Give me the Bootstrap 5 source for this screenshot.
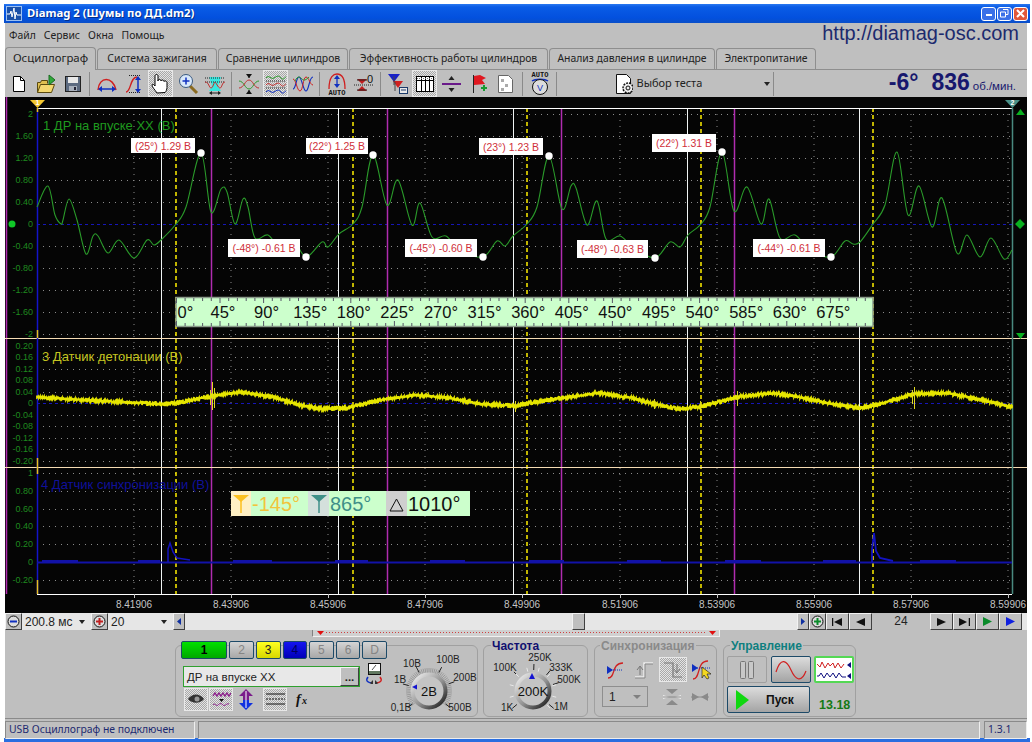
<!DOCTYPE html>
<html lang="ru">

<head>
    <meta charset="UTF-8">
    <meta name="viewport" content="width=device-width, initial-scale=1.0">
    <title>Diamag 2</title>

    <link href="https://cdn.jsdelivr.net/npm/bootstrap@5.3.2/dist/css/bootstrap.min.css" rel="stylesheet">

    <style>
        html, body { height: 742px; overflow: hidden; background: #fff; }
        body { font-family: "Noto Sans", "Liberation Sans", sans-serif; font-size: 10.4px; color: #222; }
        .app-win { width: 1026px; margin: 4px 0 0 4px; }
        .win-title { height: 19px; background: linear-gradient(#2a78f0 0, #0a5ce6 3px, #0350de 14px, #0a4fc8 100%); color: #fff; font-weight: 700; font-size: 11.3px; padding-left: 2px; text-shadow: 1px 1px 0 #02308c; }
        .win-logo { width: 16px; height: 15px; background: #1a50a8; border: 1px solid #9cc0f0; margin-right: 5px; }
        .win-btn { width: 15px; height: 14px; border: 1px solid #fff; border-radius: 3px; background: #3a70e8; margin-right: 1px; }
        .win-btn.is-close { background: #e0583a; margin-right: 2px; }
        .win-body { margin-left: 1px; width: 1022px; background: #bfbfbf; }
        .win-foot { height: 4px; background: #2a6ee0; }

        .menu-row { height: 24px; padding-left: 4px; }
        .menu-row span { margin-right: 8px; padding-top: 5px; }
        .site-url { font: 20px "Liberation Sans", sans-serif; color: #1c2a6e; margin-right: 8px; line-height: 20px; }

        .tabs-row { height: 22px; border: 0; gap: 1px; padding: 0; flex-wrap: nowrap; }
        .tabs-row .nav-link { height: 21px; margin: 1px 0 0; padding: 2px 0 0; text-align: center; font-size: 10.4px; line-height: 15px; color: #222; background: #bfbfbf; border: 1px solid #8e8e8e; border-bottom: 0; border-radius: 4px 4px 0 0; }
        .tabs-row .nav-link.active { height: 23px; margin-top: 0; padding-top: 2px; font-size: 11.4px; background: #bfbfbf; color: #222; border-color: #8e8e8e; }
        .tab-a { width: 91px; } .tab-b { width: 120px; } .tab-c { width: 130px; } .tab-d { width: 199px; } .tab-e { width: 166px; } .tab-f { width: 100px; }

        .tool-row { height: 28px; border-top: 1px solid #8e8e8e; }
        .tb-btn { width: 27px; height: 27px; padding: 0; border: 0; border-radius: 0; display: flex; align-items: center; justify-content: center; flex: none; }
        .tb-on { width: 25px; margin: 0 1px; background: repeating-conic-gradient(#a8a8a8 0 25%, #e4e4e4 0 50%) 0 0 / 2px 2px; border: 1px solid #e8e8e8; }
        .tb-sep { width: 1px; height: 24px; background: #8a8a8a; margin: 0 3px; flex: none; }
        .test-pick { width: 210px; padding: 0 0 0 55px; }
        .test-pick .pick-text { margin-left: 3px; font-size: 11px; width: 112px; }
        .tri-down { width: 0; height: 0; border-left: 3px solid transparent; border-right: 3px solid transparent; border-top: 4px solid #222; display: inline-block; }
        .rpm-box { margin-left: auto; margin-right: 11px; color: #17186e; font: 700 23px "Liberation Sans", sans-serif; white-space: nowrap; line-height: 24px; }
        .rpm-box small { font-weight: 400; font-size: 11.5px; margin-left: 3px; }
        .rpm-gap { margin-left: 13px; }

        .scope { height: 516px; background: #050505; }
        .scope svg { display: block; }
        .t-ax { font: 9px "Liberation Sans", sans-serif; fill: #1f8a1f; }
        .t-time { font: 10px "Liberation Sans", sans-serif; fill: #c4c4c4; text-anchor: middle; }
        .t-tag { font: 10.5px "Liberation Sans", sans-serif; fill: #d0303a; text-anchor: middle; }
        .t-title { font: 13px "Liberation Sans", sans-serif; }
        .t-ruler { font: 16.5px "Liberation Sans", sans-serif; fill: #111; text-anchor: middle; }
        .t-read { font: 20px "Liberation Sans", sans-serif; }
        .t-pin { font: 700 7px "Liberation Sans", sans-serif; text-anchor: middle; }

        .scroll-row { height: 17px; background: #e6e6e6; }
        .raised { background: #bfbfbf; border: 1px solid; border-color: #f2f2f2 #404040 #404040 #f2f2f2; display: flex; align-items: center; justify-content: center; flex: none; }
        .combo-box { background: #e6e6e6; font: 12px "Liberation Sans", sans-serif; padding: 0 6px 0 3px; display: flex; align-items: center; justify-content: space-between; flex: none; }
        .combo-a { width: 69px; } .combo-b { width: 65px; }
        .sq-btn { width: 17px; height: 17px; }
        .sb-btn { width: 12px; height: 17px; }
        .sb-track { width: 612px; flex: none; padding-left: 387px; }
        .sb-thumb { width: 13px; height: 17px; }
        .nav-btn { width: 23px; height: 17px; }
        .page-no { width: 58px; background: #bfbfbf; text-align: center; font: 12px "Liberation Sans", sans-serif; line-height: 17px; flex: none; }

        .ctrl-panel { height: 88px; }
        .range-strip { height: 7px; width: 408px; margin-left: 307px; background: #d0d0d0; border: 1px solid; border-color: #808080 #f0f0f0 #f0f0f0 #808080; border-top: 0; }
        .range-strip svg { display: block; }
        .group-row { padding-left: 170px; padding-top: 8px; gap: 5px; }
        .ctl-group { position: relative; height: 72px; border: 1px solid #a0a0a0; border-radius: 6px; flex: none; }
        .ctl-title { position: absolute; top: -7px; left: 6px; background: #bfbfbf; font: 700 12px "Liberation Sans", sans-serif; line-height: 14px; padding: 0 1px; }
        .title-freq { color: #101070; left: 7px; }
        .title-sync { color: #8a8a8a; left: 5px; }
        .title-ctrl { color: #0f7f7f; }
        .g-chan { width: 303px; } .g-freq { width: 105px; } .g-sync { width: 123px; margin-left: 1px; } .g-ctrl { width: 133px; margin-left: 1px; }
        .chan-col { width: 211px; margin-top: -5px; padding-left: 5px; }
        .ch-row { gap: 2px; }
        .ch-btn { width: 25px; height: 18px; padding: 0; border: 1px solid #1d4a68; border-radius: 2px; font: 12px "Liberation Sans", sans-serif; line-height: 15px; color: #858585; background: linear-gradient(#d4d4d4, #a8a8a8); }
        .ch-one { width: 47px; color: #000; font-weight: 700; background: linear-gradient(#00e000, #00a800); }
        .ch-yel { color: #222; background: linear-gradient(#ffff20, #d8d800); }
        .ch-blu { color: #00005a; background: linear-gradient(#1414f0, #0000b8); }
        .name-box { width: 177px; height: 21px; margin: 7px 0 0 2px; border: 1px solid #2fa02f; background: #e8e8e8; font: 11.5px "Liberation Sans", sans-serif; padding-left: 3px; }
        .name-dots { width: 19px; height: 19px; font-weight: 700; line-height: 10px; }
        .ch-tools { margin-left: 3px; height: 24px; }
        .ch-tool { width: 24px; height: 23px; margin-right: 1px; display: flex; align-items: center; justify-content: center; flex: none; }
        .ch-tool.tb-on { margin: 0 1px 0 0; }
        .sync-grid { padding: 11px 0 0 7px; }
        .sync-cell { width: 28px; height: 25px; display: flex; align-items: center; justify-content: center; flex: none; }
        .sync-pair { margin-top: 2px; }
        .sync-num { width: 46px; height: 21px; border: 1px solid #8e8e8e; font: 12px "Liberation Sans", sans-serif; padding: 0 6px; color: #222; margin-right: 10px; }
        .tri-soft { border-top-color: #808080; border-left-width: 4px; border-right-width: 4px; }
        .ctrl-wrap { padding: 10px 0 0 3px; }
        .mode-btn { width: 40px; height: 27px; padding: 0; border-radius: 2px; display: flex; align-items: center; justify-content: center; flex: none; }
        .mode-off { border: 1px solid #a0a0a0; background: #bfbfbf; }
        .mode-on { border: 1px solid #1d4a68; background: linear-gradient(#dcdcdc, #a4a4a4); }
        .mode-lit { border: 2px solid #54d854; background: #fff; margin-left: 3px; }
        .run-btn { width: 83px; height: 27px; margin-top: 3px; padding: 0 0 0 8px; border: 1px solid #1d4a68; border-radius: 2px; background: linear-gradient(#dcdcdc, #a4a4a4); font: 700 12px "Liberation Sans", sans-serif; color: #111; display: flex; align-items: center; }
        .run-btn span { margin-left: 16px; }
        .volt-read { font: 700 12.5px "Liberation Sans", sans-serif; color: #157a15; margin: 15px 0 0 9px; line-height: 14px; }

        .status-row { height: 20px; border-top: 1px solid #8a8a8a; padding-top: 2px; }
        .stat-cell { height: 18px; border: 1px solid; border-color: #8a8a8a #eee #eee #8a8a8a; font: 10.4px "Noto Sans", sans-serif; line-height: 15px; color: #1d2a70; padding-left: 3px; flex: none; }
        .st-a { width: 190px; margin-right: 3px; } .st-b { width: 782px; margin-right: 4px; } .st-c { width: 43px; }
    </style>
</head>

<body>
    <div class="app-win">
        <div class="win-title d-flex align-items-center">
            <span class="win-logo d-flex align-items-center justify-content-center">
                <svg width="14" height="13" viewBox="0 0 14 13"><path d="M0 7h3l1-3 1 6 2-9 1 11 1-7 1 3h4" fill="none" stroke="#fff"/></svg>
            </span>
            <span class="flex-grow-1">Diamag 2 (Шумы по ДД.dm2)</span>
            <span class="win-btn d-flex align-items-end ps-1 pb-1"><svg width="6" height="2"><rect width="6" height="2" fill="#fff"/></svg></span>
            <span class="win-btn d-flex align-items-center justify-content-center"><svg width="9" height="9"><path d="M3 .5h5v5h-2M.5 3h5v5h-5z" fill="none" stroke="#fff"/></svg></span>
            <span class="win-btn is-close d-flex align-items-center justify-content-center"><svg width="9" height="9"><path d="M1 1l7 7M8 1L1 8" stroke="#fff" stroke-width="2"/></svg></span>
        </div>

        <div class="win-body">
            <div class="menu-row d-flex justify-content-between">
                <div class="d-flex"><span>Файл</span><span>Сервис</span><span>Окна</span><span>Помощь</span></div>
                <div class="site-url">http://diamag-osc.com</div>
            </div>

            <ul class="nav nav-tabs tabs-row">
                <li class="nav-item"><a class="nav-link active tab-a" href="#">Осциллограф</a></li>
                <li class="nav-item"><a class="nav-link tab-b" href="#">Система зажигания</a></li>
                <li class="nav-item"><a class="nav-link tab-c" href="#">Сравнение цилиндров</a></li>
                <li class="nav-item"><a class="nav-link tab-d" href="#">Эффективность работы цилиндров</a></li>
                <li class="nav-item"><a class="nav-link tab-e" href="#">Анализ давления в цилиндре</a></li>
                <li class="nav-item"><a class="nav-link tab-f" href="#">Электропитание</a></li>
            </ul>

            <div class="tool-row d-flex align-items-center">
                <button class="btn tb-btn"><svg width="20" height="20"><path d="M4.500 2.500h7l4 4v11h-11z" fill="#fff" stroke="#000"/><path d="M11.500 2.500v4h4" fill="none" stroke="#000"/></svg></button>
                <button class="btn tb-btn"><svg width="22" height="20"><path d="M2.500 18.500v-10h3l1-2h6v3" fill="#e0c050" stroke="#5a4a10"/><path d="M2.500 18.500l3-8h14l-3 8z" fill="#f4d870" stroke="#5a4a10"/><path d="M14 1l6 5-6 5z" fill="#2fa83a" stroke="#1a6a20"/></svg></button>
                <button class="btn tb-btn"><svg width="18" height="18"><rect x="1.500" y="1.500" width="15" height="15" fill="#5c6a80" stroke="#222"/><rect x="4" y="2" width="10" height="6" fill="#e8e8e8"/><rect x="5" y="11" width="8" height="5" fill="#a8b0bc"/><rect x="10" y="12" width="2" height="3" fill="#223"/></svg></button>
                <div class="tb-sep"></div>
                <button class="btn tb-btn"><svg width="22" height="22"><path d="M2 17C3 3 17 3 20 17" fill="none" stroke="#d02020" stroke-width="1.500"/><path d="M3 16h16" stroke="#1030c0" stroke-width="1.500"/><path d="M2 16l4-3v6zM20 16l-4-3v6z" fill="#1030c0"/></svg></button>
                <button class="btn tb-btn"><svg width="22" height="22"><path d="M3 19c5 0 4-15 11-15" fill="none" stroke="#d02020" stroke-width="1.300"/><path d="M6 2.500h12M6 19.500h12" stroke="#222" stroke-dasharray="1 1"/><path d="M15 5v13" stroke="#1030c0" stroke-width="1.500"/><path d="M15 3l-3 4h6zM15 20l-3-4h6z" fill="#1030c0"/></svg></button>
                <button class="btn tb-btn tb-on"><svg width="19" height="22"><path d="M6 20c-2-3-5-6-5-8 0-1 2-1 3 1V3c0-2 3-2 3 0v5c0-2 3-2 3 0 0-1.500 3-1.500 3 .5 0-1 3-1 3 1v5c0 2-1 4-2 5z" fill="#fff" stroke="#000"/></svg></button>
                <button class="btn tb-btn"><svg width="22" height="22"><path d="M13 13l7 7" stroke="#8a6a20" stroke-width="3"/><circle cx="9" cy="8" r="6.500" fill="#d8e8fa" stroke="#3a5a80"/><path d="M5.500 8h7M9 4.500v7" stroke="#1030c0" stroke-width="1.500"/></svg></button>
                <button class="btn tb-btn"><svg width="22" height="22"><path d="M5 4h12l-3 9 3 5H5l3-5z" fill="#38e8e0"/><path d="M1 5h20M1 9h20" stroke="#222" stroke-dasharray="1 1"/><path d="M1 9c4 0 4 6 6 6s3-6 4-6 3 6 5 6 2-6 5-6" fill="none" stroke="#c03030"/><path d="M6 20h10" stroke="#222"/><path d="M5 20l3-2v4zM17 20l-3-2v4z" fill="#222"/></svg></button>
                <div class="tb-sep"></div>
                <button class="btn tb-btn"><svg width="22" height="22"><path d="M1 8c5 0 6 8 10 8s5-8 10-8" fill="none" stroke="#2a9a2a"/><path d="M1 15c5 0 6-8 10-8s5 8 10 8" fill="none" stroke="#c03030"/><path d="M11 5V1M11 17v4" stroke="#111"/><path d="M8 1h6l-3 4zM8 21h6l-3-4z" fill="#111"/></svg></button>
                <button class="btn tb-btn tb-on"><svg width="22" height="22"><path d="M1 5c3-4 5 2 8 0s5-3 7 0 4-1 5-1" fill="none" stroke="#2a9a2a"/><path d="M1 12c3-4 5 2 8 0s5-3 7 0 4-1 5-1" fill="none" stroke="#c03030"/><path d="M1 19c3-4 5 2 8 0s5-3 7 0 4-1 5-1" fill="none" stroke="#1030c0"/><path d="M1 8h20M1 15h20" stroke="#222" stroke-dasharray="1 1"/></svg></button>
                <button class="btn tb-btn"><svg width="22" height="22"><path d="M1 16c3 0 3-12 6-12s4 14 7 14 3-14 7-14" fill="none" stroke="#1030c0" stroke-width="1.100"/><path d="M1 6c3 0 4 12 7 12s3-14 6-14 4 8 7 8" fill="none" stroke="#d02020"/><path d="M3 8c3-6 5-4 7-2s4 1 7-2" fill="none" stroke="#2a9a2a"/></svg></button>
                <div class="tb-sep"></div>
                <button class="btn tb-btn"><svg width="22" height="24"><path d="M3 17C3 4 8 2 11 2s8 2 8 15" fill="none" stroke="#d02020" stroke-width="1.300"/><path d="M11 5v9" stroke="#1030c0" stroke-width="1.300"/><path d="M11 3L8 7h6zM11 16l-3-4h6z" fill="#1030c0"/><text x="11" y="23" text-anchor="middle" font-family="Liberation Mono" font-weight="700" font-size="7" fill="#111">AUTO</text></svg></button>
                <button class="btn tb-btn"><svg width="22" height="20"><path d="M1 11h20" stroke="#222" stroke-dasharray="1 1"/><path d="M4 5h10l-5 5zM4 17h10l-5-5z" fill="#c02020"/><path d="M4 6h10M4 16h10" stroke="#222"/><text x="17" y="9" text-anchor="middle" font-family="Liberation Sans" font-size="11" fill="#111">0</text></svg></button>
                <div class="tb-sep"></div>
                <button class="btn tb-btn"><svg width="22" height="22"><path d="M1 1h12l-6 8z" fill="#1820c8"/><path d="M6 8h10l-5 7z" fill="#d02020"/><path d="M8 9v9M7 3v9" stroke="#444"/><rect x="12.500" y="14.500" width="8" height="6" fill="#e8e8e8" stroke="#1a3a6a"/><path d="M14 17h5" stroke="#1a3a6a"/></svg></button>
                <button class="btn tb-btn tb-on"><svg width="20" height="20"><rect x="1.500" y="2.500" width="17" height="15" fill="#fff" stroke="#000"/><path d="M1 6.500h18" stroke="#000"/><path d="M6.500 3v14M10.500 3v14M14.500 3v14" stroke="#000"/><path d="M2 4.500h16" stroke="#777" stroke-dasharray="1 1"/></svg></button>
                <button class="btn tb-btn"><svg width="21" height="20"><path d="M1 10h19" stroke="#6a1a8a" stroke-width="2"/><path d="M10.500 2l-3 4h6zM10.500 18l-3-4h6z" fill="#222"/></svg></button>
                <button class="btn tb-btn"><svg width="18" height="20"><path d="M3.500 1v18" stroke="#222"/><path d="M4 2l6-1 6 3-4 2 3 4-11 1z" fill="#e01820"/><path d="M11 14h6M14 11v6" stroke="#189a30" stroke-width="2"/></svg></button>
                <button class="btn tb-btn"><svg width="17" height="20"><path d="M1.500 1.500h10l4 4v13h-14z" fill="#fff" stroke="#666"/><path d="M4 5h3v3H4zM8 10h3v3H8zM4 14h3v3H4z" fill="#aaa"/></svg></button>
                <div class="tb-sep"></div>
                <button class="btn tb-btn"><svg width="20" height="25"><text x="10" y="6" text-anchor="middle" font-family="Liberation Mono" font-weight="700" font-size="7" fill="#111">AUTO</text><path d="M2 10c3-2.500 13-2.500 16 0" fill="none" stroke="#1030c0" stroke-width="1.500"/><circle cx="10" cy="16" r="7.500" fill="#dcdcdc" stroke="#111"/><text x="10" y="19.500" text-anchor="middle" font-family="Liberation Sans" font-size="9" fill="#1030c0">V</text></svg></button>
                <div class="tb-sep"></div>
                <div class="test-pick d-flex align-items-center">
                    <svg width="20" height="22"><path d="M1.500 1.500h10l4 4v15h-14z" fill="#fff" stroke="#111"/><circle cx="13" cy="15" r="5" fill="#eee" stroke="#111" stroke-width="1.500" stroke-dasharray="2 1"/><circle cx="13" cy="15" r="2" fill="none" stroke="#111"/></svg>
                    <span class="pick-text">Выбор теста</span>
                    <span class="tri-down ms-4"></span>
                </div>
                <div class="tb-sep"></div>
                <div class="rpm-box">-6°<span class="rpm-gap">836</span><small>об./мин.</small></div>
            </div>

            <div class="scope"><svg id="plot" width="1022" height="516" viewBox="5 97 1022 516"></svg></div>

            <div class="scroll-row d-flex">
                <div class="raised sq-btn"><svg width="13" height="13"><circle cx="6.500" cy="6.500" r="5.500" fill="#dcdcdc" stroke="#111"/><path d="M3 6.500h7" stroke="#1030c0" stroke-width="2"/></svg></div>
                <div class="combo-box combo-a"><span>200.8 мс</span><span class="tri-down"></span></div>
                <div class="raised sq-btn"><svg width="13" height="13"><circle cx="6.500" cy="6.500" r="5.500" fill="#dcdcdc" stroke="#111"/><path d="M3 6.500h7M6.500 3v7" stroke="#c02020" stroke-width="2"/></svg></div>
                <div class="combo-box combo-b"><span>20</span><span class="tri-down"></span></div>
                <div class="raised sb-btn"><svg width="4" height="7"><path d="M4 0L0 3.500 4 7z" fill="#1030a0"/></svg></div>
                <div class="sb-track"><div class="raised sb-thumb"></div></div>
                <div class="raised sb-btn"><svg width="4" height="7"><path d="M0 0l4 3.500L0 7z" fill="#1030a0"/></svg></div>
                <div class="raised sq-btn"><svg width="13" height="13"><circle cx="6.500" cy="6.500" r="5.500" fill="#dcdcdc" stroke="#111"/><path d="M3 6.500h7M6.500 3v7" stroke="#0a8a2a" stroke-width="2"/></svg></div>
                <div class="raised nav-btn"><svg width="11" height="8"><path d="M.5 0v8" stroke="#111" stroke-width="1.500"/><path d="M10 0L2 4l8 4z" fill="#111"/></svg></div>
                <div class="raised nav-btn"><svg width="9" height="8"><path d="M9 0L0 4l9 4z" fill="#111"/></svg></div>
                <div class="page-no">24</div>
                <div class="raised nav-btn"><svg width="9" height="8"><path d="M0 0l9 4-9 4z" fill="#111"/></svg></div>
                <div class="raised nav-btn"><svg width="11" height="8"><path d="M10.500 0v8" stroke="#111" stroke-width="1.500"/><path d="M0 0l8 4-8 4z" fill="#111"/></svg></div>
                <div class="raised nav-btn"><svg width="9" height="9"><path d="M0 0l9 4.500L0 9z" fill="#0a8a2a"/></svg></div>
                <div class="raised nav-btn"><svg width="9" height="9"><path d="M0 0l9 4.500L0 9z" fill="#1020e0"/></svg></div>
            </div>

            <div class="ctrl-panel">
                <div class="range-strip">
                    <svg width="406" height="6"><path d="M13 2.500h380" stroke="#d04040" stroke-dasharray="1 2"/><path d="M4 1h7L7.500 5zM396 1h7l-3.500 4z" fill="#e01010"/></svg>
                </div>
                <div class="group-row d-flex">
                    <div class="ctl-group g-chan d-flex">
                        <div class="chan-col">
                            <div class="d-flex ch-row">
                                <button class="btn ch-btn ch-one">1</button>
                                <button class="btn ch-btn">2</button>
                                <button class="btn ch-btn ch-yel">3</button>
                                <button class="btn ch-btn ch-blu">4</button>
                                <button class="btn ch-btn">5</button>
                                <button class="btn ch-btn">6</button>
                                <button class="btn ch-btn">D</button>
                            </div>
                            <div class="d-flex align-items-center">
                                <div class="name-box d-flex align-items-center justify-content-between">
                                    <span>ДР на впуске ХХ</span>
                                    <span class="raised name-dots">...</span>
                                </div>
                                <svg class="ms-1" width="20" height="21"><rect x="4.500" y=".500" width="12" height="11" fill="#fff" stroke="#111"/><rect x="5" y="8" width="11" height="3" fill="#607860"/><path d="M8 7l4-5" stroke="#555"/><path d="M4 14c-3 4 0 6 5 6" fill="none" stroke="#1030c0" stroke-width="1.500"/><path d="M16 14c3 4 0 6-5 6" fill="none" stroke="#d02020" stroke-width="1.500"/><path d="M9 17v6l-3-3zM11 17v6l3-3z" fill="#333"/></svg>
                            </div>
                            <div class="ch-tools d-flex align-items-center">
                                <div class="ch-tool tb-on"><svg width="18" height="12"><path d="M1 6c4-6 12-6 16 0-4 5-12 5-16 0z" fill="#333"/><circle cx="10" cy="6" r="2.500" fill="#999"/></svg></div>
                                <div class="ch-tool tb-on"><svg width="19" height="18"><path d="M1 6l2-3 2 3 2-3 2 3 2-3 2 3 2-3 2 3 2-3" fill="none" stroke="#8a1a8a" stroke-width="1.300"/><path d="M7 9h5l-2.500 3z" fill="#111"/><path d="M1 15c2-3 3 2 5 0s3-2 5 0 3-2 6-1" fill="none" stroke="#8a1a8a"/></svg></div>
                                <div class="ch-tool"><svg width="16" height="21"><path d="M8 0L1 7h4v4h6V7h4z" fill="#7a1a8a"/><path d="M8 21l-7-7h4v-3h6v3h4z" fill="#1030e0"/><path d="M8 2v17" stroke="#fff"/></svg></div>
                                <div class="ch-tool tb-on ms-1"><svg width="19" height="14"><path d="M0 2h19M0 12h19" stroke="#111"/><path d="M0 7h19" stroke="#111" stroke-dasharray="2 1"/></svg></div>
                                <div class="ch-tool ms-1"><svg width="18" height="16"><text x="1" y="13" font-family="Liberation Serif" font-style="italic" font-weight="700" font-size="14" fill="#111">f</text><text x="7" y="13" font-family="Liberation Serif" font-style="italic" font-weight="700" font-size="10" fill="#111">x</text></svg></div>
                            </div>
                        </div>
                        <svg id="dialVolt" width="90" height="70" viewBox="387 646 90 70"></svg>
                    </div>

                    <div class="ctl-group g-freq">
                        <span class="ctl-title title-freq">Частота</span>
                        <svg id="dialFreq" width="103" height="70" viewBox="484 646 103 70"></svg>
                    </div>

                    <div class="ctl-group g-sync">
                        <span class="ctl-title title-sync">Синхронизация</span>
                        <div class="sync-grid">
                            <div class="d-flex">
                                <div class="sync-cell"><svg width="20" height="20"><path d="M2 18c8 0 3-15 15-15" fill="none" stroke="#d02020" stroke-width="1.300"/><path d="M3 10h14" stroke="#1030c0" stroke-dasharray="1 1"/><path d="M1 6l6 4-6 4z" fill="#1030c0"/></svg></div>
                                <div class="sync-cell"><svg width="20" height="18"><path d="M1 16h9V2h9" fill="none" stroke="#eee" stroke-width="1.500"/><path d="M1 17h10V3h8" fill="none" stroke="#888"/><path d="M6 6v8M3 9l3-4 3 4" fill="none" stroke="#777"/></svg></div>
                                <div class="sync-cell tb-on"><svg width="20" height="18"><path d="M1 2h9v14h9" fill="none" stroke="#777" stroke-width="1.200"/><path d="M14 3v8M11 8l3 4 3-4" fill="none" stroke="#777"/></svg></div>
                                <div class="sync-cell"><svg width="22" height="22"><path d="M2 20c8 0 3-18 15-18" fill="none" stroke="#d02020" stroke-width="1.300"/><path d="M4 9h16" stroke="#1030c0" stroke-dasharray="1 1"/><path d="M1 5l6 4-6 4z" fill="#1030c0"/><path d="M11 8l9 7h-4l2 4-2 1-3-4-2 3z" fill="#f4d820" stroke="#111" stroke-width=".6"/></svg></div>
                            </div>
                            <div class="d-flex align-items-center sync-pair">
                                <div class="sync-num d-flex align-items-center justify-content-between"><span>1</span><span class="tri-down tri-soft"></span></div>
                                <div class="sync-cell"><svg width="18" height="18"><path d="M0 7l6 2-6 2zM18 7l-6 2 6 2z" fill="#eee"/><path d="M0 9h18" stroke="#888"/><path d="M3 1h12l-6 5zM3 17h12l-6-5z" fill="#8a8a8a"/></svg></div>
                                <div class="sync-cell"><svg width="18" height="12"><path d="M0 6h18" stroke="#8a8a8a"/><path d="M1 2l7 4-7 4zM17 2l-7 4 7 4z" fill="#8a8a8a"/></svg></div>
                            </div>
                        </div>
                    </div>

                    <div class="ctl-group g-ctrl">
                        <span class="ctl-title title-ctrl">Управление</span>
                        <div class="ctrl-wrap">
                            <div class="d-flex">
                                <div class="mode-btn mode-off"><svg width="14" height="18"><rect x=".5" y=".5" width="5" height="17" rx="1" fill="#c8c8c8" stroke="#777"/><rect x="8.500" y=".5" width="5" height="17" rx="1" fill="#c8c8c8" stroke="#777"/></svg></div>
                                <div class="mode-btn mode-on ms-1"><svg width="32" height="24"><path d="M1 14C6-2 12 3 16 12s10 14 15 1" fill="none" stroke="#d02020" stroke-width="1.200"/></svg></div>
                                <div class="mode-btn mode-lit"><svg width="34" height="20"><path d="M0 4l3 3 2-5 3 6 3-5 2 3 3-3 2 5 3-5 3 5 3-4" fill="none" stroke="#d02020"/><path d="M0 16h2l2-3 3 5 3-5 3 4 3-4 3 5 3-5 3 4h4" fill="none" stroke="#101080"/><path d="M34 2l-4 3 4 3zM34 13l-4 3 4 3z" fill="#101080"/></svg></div>
                            </div>
                            <div class="d-flex">
                                <button class="btn run-btn"><svg width="14" height="20"><path d="M0 0l13 10L0 20z" fill="#10d810"/></svg><span>Пуск</span></button>
                                <div class="volt-read">13.18</div>
                            </div>
                        </div>
                    </div>
                </div>
            </div>

            <div class="status-row d-flex">
                <div class="stat-cell st-a">USB Осциллограф не подключен</div>
                <div class="stat-cell st-b"></div>
                <div class="stat-cell st-c">1.3.1</div>
            </div>
        </div>
        <div class="win-foot"></div>
    </div>

    <script src="https://cdn.jsdelivr.net/npm/bootstrap@5.3.2/dist/js/bootstrap.bundle.min.js"></script>
    <script>
    // scope picture, all coordinates are screen pixels (the svg viewBox starts at the scope corner)
    const L = 37, R = 1012, TOP = 108, BOT = 594;
    let s = '';

    function rnd(i) { const v = Math.sin(i * 12.9898) * 43758.5453; return v - Math.floor(v); }
    function interp(pts, x) {
        for (let i = 1; i < pts.length; i++) {
            if (x <= pts[i][0]) {
                const t = (x - pts[i - 1][0]) / (pts[i][0] - pts[i - 1][0]);
                return pts[i - 1][1] + (pts[i][1] - pts[i - 1][1]) * t;
            }
        }
        return pts[pts.length - 1][1];
    }
    function smooth(p) {
        let d = 'M' + p[0][0] + ' ' + p[0][1];
        for (let i = 0; i < p.length - 1; i++) {
            const a = p[Math.max(i - 1, 0)], b = p[i], c = p[i + 1], e = p[Math.min(i + 2, p.length - 1)];
            d += 'C' + (b[0] + (c[0] - a[0]) / 6).toFixed(1) + ' ' + (b[1] + (c[1] - a[1]) / 6).toFixed(1) + ' '
                + (c[0] - (e[0] - b[0]) / 6).toFixed(1) + ' ' + (c[1] - (e[1] - b[1]) / 6).toFixed(1) + ' ' + c[0] + ' ' + c[1];
        }
        return d;
    }

    // grid
    const timeX = [134, 231, 328, 425, 522, 620, 717, 814, 911, 1008];
    timeX.forEach(x => { s += `<path d="M${x} ${TOP}V${BOT}" stroke="#8a8a8a" stroke-dasharray="1 5"/>`; });

    const axes = [
        { zero: 224.3, step: 22, vals: ['2', '1.60', '1.20', '0.80', '0.40', '0', '-0.40', '-0.80', '-1.20', '-1.60', '-2'] },
        { zero: 403, step: 11.5, vals: ['0.20', '0.16', '0.12', '0.08', '0.04', '0', '-0.04', '-0.08', '-0.12', '-0.16', '-0.20'] },
        { zero: 562, step: 17.8, vals: ['1', '0.80', '0.60', '0.40', '0.20', '0', '-0.20'] }
    ];
    axes.forEach(a => {
        a.vals.forEach((v, i) => {
            const y = Math.round(a.zero + (i - 5) * a.step);
            if (v !== '0') s += `<path d="M${L} ${y}.5H${R}" stroke="#8a8a8a" stroke-dasharray="1 5"/>`;
            s += `<text class="t-ax" x="33" y="${y + 3}" text-anchor="end">${v}</text>`;
        });
        s += `<path d="M${L} ${Math.round(a.zero)}.5H${R}" stroke="#1616b8" stroke-dasharray="3 3"/>`;
    });

    // cursors
    [161, 338, 513, 687, 859].forEach(x => { s += `<path d="M${x}.5 ${TOP}V${BOT}" stroke="#f0f4f4"/>`; });
    [176, 353, 527, 701, 873].forEach(x => { s += `<path d="M${x} ${TOP}V${BOT}" stroke="#fff000" stroke-width="1.500" stroke-dasharray="4 3"/>`; });
    [211, 387, 561, 734].forEach(x => { s += `<path d="M${x}.5 ${TOP}V${BOT}" stroke="#b02cb0" stroke-width="1.500"/>`; });
    s += `<path d="M6.500 97V594" stroke="#b02cb0" stroke-width="1.500"/>`;

    // frame
    s += `<path d="M${L} ${TOP}.5H${R}M${L} ${BOT}.5H${R}" stroke="#fff"/>`;
    s += `<path d="M5 338.500H1027M5 467.500H1027" stroke="#f6dcb4"/>`;
    s += `<path d="M${L}.5 ${TOP}V${BOT}" stroke="#1414c8" stroke-width="1.500"/>`;
    s += `<path d="M${L}.5 ${TOP}v4M${L}.5 330v8M${L}.5 458v16M${L}.5 580v14" stroke="#e8c020" stroke-width="1.500"/>`;
    s += `<path d="M${R}.5 ${TOP}V${BOT}" stroke="#4a8a80" stroke-width="1.500"/>`;
    timeX.forEach((x, i) => {
        s += `<path d="M${x}.5 ${BOT}v4" stroke="#c4c4c4"/>`;
        s += `<text class="t-time" x="${x}" y="608">8.${41906 + 2000 * i}</text>`;
    });

    // channel 1
    const green = [[37,207],[48,186],[55,215],[61,224],[63,220],[69,199],[77,220],[86,254],[93,236],[98,236],[108,253],[119,240],[134,258],[147,240],[154,245],[161,240],[176,224],[186,207],[201,153],[211,212],[221,189],[227,192],[235,224],[243,199],[248,207],[255,238],[268,235],[280,248],[293,240],[306,257],[322,242],[328,247],[339,234],
        [353,224],[362,207],[373,155],[387,205],[398,180],[412,225],[420,203],[432,237],[446,236],[460,250],[483,257],[497,241],[505,246],[513,236],[527,224],[537,207],[549,156],[562,209],[571,186],[576,188],[587,225],[597,201],[606,239],[620,236],[633,247],[655,258],[670,242],[680,247],[688,235],
        [701,224],[710,207],[722,152],[734,211],[747,187],[761,224],[769,199],[780,238],[795,235],[810,250],[831,257],[845,241],[853,244],[860,242],[873,224],[885,205],[897,152],[908,215],[919,186],[932,227],[942,198],[957,253],[967,235],[980,257],[991,238],[1004,259],[1012,250]];
    s += `<path d="${smooth(green)}" fill="none" stroke="#2a9a2a" stroke-width="1.100"/>`;

    // channel 3, a noisy band
    const yel = [[37,397],[100,401],[160,404],[177,403],[212,396],[240,392],[273,397],[300,405],[320,409],[347,408],[380,400],[417,395],[450,398],[480,404],[514,406],[528,403],[562,398],[599,393],[632,398],[654,404],[679,409],[700,407],[737,397],[774,393],[799,397],[827,403],[859,408],[875,405],[914,394],[948,393],[987,401],[1012,407]];
    let band = '';
    for (let x = L; x <= R; x++) {
        const loud = (x > 140 && x < 215) || (x > 330 && x < 385) || (x > 500 && x < 560) || (x > 660 && x < 740) || (x > 850 && x < 915);
        const amp = loud ? 2.6 : 1.5;
        const y = interp(yel, x);
        band += (x === L ? 'M' : 'L') + x + ' ' + (y - amp * rnd(x)).toFixed(1) + 'L' + x + ' ' + (y + amp * rnd(x + .5)).toFixed(1);
    }
    s += `<path d="${band}" fill="none" stroke="#e6e600" stroke-width="1.800"/>`;
    [[212,382,410],[210,390,405],[214,388,408],[914,387,409],[912,390,404],[737,391,406],[654,399,409],[700,401,413],[515,401,412]].forEach(k => {
        s += `<path d="M${k[0]}.5 ${k[1]}V${k[2]}" stroke="#e0d820"/>`;
    });

    // channel 4
    s += `<path d="M${L} 562.500H${R}" stroke="#1212a8" stroke-width="2"/>`;
    [[42,78],[138,160],[233,272],[335,368],[430,465],[529,564],[627,661],[725,761],[823,856],[920,956]].forEach(b => {
        s += `<path d="M${b[0]} 561H${b[1]}" stroke="#1212a8" stroke-width="2"/>`;
    });
    s += `<path d="M168 562V549L170 543L173 552L177 558L190 560" fill="none" stroke="#1212c0" stroke-width="1.500"/>`;
    s += `<path d="M872 562V550L874 533L876 551L880 558L893 561" fill="none" stroke="#1212c0" stroke-width="1.800"/>`;

    // channel titles
    s += `<text class="t-title" x="43" y="130" fill="#1f9a1f">1 ДР на впуске ХХ (В)</text>`;
    s += `<text class="t-title" x="42" y="361" fill="#c4c420">3 Датчик детонации (В)</text>`;
    s += `<text class="t-title" x="41" y="489" fill="#10109a">4 Датчик синхронизации (В)</text>`;

    // peak markers and their tags
    [[201,153],[373,155],[549,156],[722,152],[306,257],[483,257],[655,258],[831,257]].forEach(m => {
        s += `<circle cx="${m[0]}" cy="${m[1]}" r="3.700" fill="#fff"/>`;
    });
    [[131,138,64,15,'(25°) 1.29 В'],[228,239,72,18,'(-48°) -0.61 В'],[306,138,62,16,'(22°) 1.25 В'],[405,239,72,18,'(-45°) -0.60 В'],[479,138,64,17,'(23°) 1.23 В'],[577,240,71,18,'(-48°) -0.63 В'],[652,134,64,18,'(22°) 1.31 В'],[753,239,72,18,'(-44°) -0.61 В']].forEach(t => {
        s += `<rect x="${t[0]}" y="${t[1]}" width="${t[2]}" height="${t[3]}" fill="#fff"/>`;
        s += `<text class="t-tag" x="${t[0] + t[2] / 2}" y="${t[1] + t[3] / 2 + 4}">${t[4]}</text>`;
    });

    // pins at the edges
    s += `<path d="M30 100h15l-7.500 8z" fill="#f4c830"/><text class="t-pin" x="37.500" y="105" fill="#fff">1</text>`;
    s += `<path d="M1005 100h15l-7.500 8z" fill="#4a9088"/><text class="t-pin" x="1012.500" y="105" fill="#fff">2</text>`;
    s += `<path d="M1016 115l4.500-6 4.500 6zM1016 333l4.500 6 4.500-6zM1020 219l5 5-5 5-5-5z" fill="#0ab020"/>`;
    s += `<circle cx="12" cy="224" r="3.500" fill="#10c828"/>`;

    // crank angle ruler
    s += `<rect x="176" y="297.500" width="697" height="29" fill="#ccffcc" stroke="#8a9a8a" stroke-width="1.500"/>`;
    for (let i = 0; i <= 79; i++) {
        const x = 176.4 + i * 8.72, big = i % 5 === 0;
        s += `<path d="M${x.toFixed(1)} 298v${big ? 5 : 3}M${x.toFixed(1)} 326v-${big ? 5 : 3}" stroke="#556"/>`;
    }
    for (let i = 0; i < 16; i++) {
        const cx = i === 0 ? 185.500 : 223 + (i - 1) * 43.6;
        s += `<text class="t-ruler" x="${cx.toFixed(1)}" y="318">${i * 45}°</text>`;
    }

    // cursor read-out
    s += `<rect x="231" y="491" width="239" height="25" fill="#ccffcc"/>`;
    s += `<rect x="231" y="491" width="20" height="25" fill="#fff0c4"/><rect x="308" y="491" width="21" height="25" fill="#d4e0dc"/><rect x="386" y="491" width="21" height="25" fill="#cfcfcf"/>`;
    s += `<path d="M233 495h16l-8 7z" fill="#fcc020"/><path d="M241 500v13" stroke="#fcc020" stroke-width="1.500"/>`;
    s += `<path d="M311 495h16l-8 7z" fill="#3f8f88"/><path d="M319 500v13" stroke="#3f8f88" stroke-width="1.500"/>`;
    s += `<path d="M396.500 499l6.500 12h-13z" fill="none" stroke="#111"/>`;
    s += `<text class="t-read" x="252" y="511" fill="#f2c43c">-145°</text><text class="t-read" x="330" y="511" fill="#3f8f88">865°</text><text class="t-read" x="408" y="511" fill="#111">1010°</text>`;

    document.getElementById('plot').innerHTML = s;

    // dials of the control panel
    function dial(id, cx, cy, label, tri, labels, dense) {
        let d = `<defs><linearGradient id="${id}R" x1="0" y1="0" x2="1" y2="1"><stop offset="0" stop-color="#f4f4f4"/><stop offset=".55" stop-color="#909090"/><stop offset="1" stop-color="#111"/></linearGradient></defs>`;
        if (dense) {
            for (let a = -220; a <= 40; a += 5) {
                const r = a * Math.PI / 180;
                d += `<path d="M${cx + 18 * Math.cos(r)} ${cy + 18 * Math.sin(r)}L${cx + 23 * Math.cos(r)} ${cy + 23 * Math.sin(r)}" stroke="#9a9a9a"/>`;
            }
        }
        labels.forEach(l => {
            const r = l[3] * Math.PI / 180;
            d += `<path d="M${cx + 21 * Math.cos(r)} ${cy + 21 * Math.sin(r)}L${cx + 27 * Math.cos(r)} ${cy + 27 * Math.sin(r)}" stroke="#222"/>`;
            d += `<text x="${l[1]}" y="${l[2] + 3}" text-anchor="middle" font-family="Liberation Sans" font-size="10" fill="#222">${l[0]}</text>`;
        });
        if (!dense) {
            for (let a = -210; a <= 40; a += 30) {
                const r = (a + 15) * Math.PI / 180;
                d += `<path d="M${cx + 20 * Math.cos(r)} ${cy + 20 * Math.sin(r)}L${cx + 24 * Math.cos(r)} ${cy + 24 * Math.sin(r)}" stroke="#e8e8e8"/>`;
            }
        }
        d += `<circle cx="${cx}" cy="${cy}" r="16.500" fill="#c4c4c4" stroke="url(#${id}R)" stroke-width="4"/>`;
        d += `<text x="${cx}" y="${cy + 5}" text-anchor="middle" font-family="Liberation Sans" font-size="13" fill="#111">${label}</text>`;
        d += `<path d="${tri}" fill="#1414d0"/>`;
        document.getElementById(id).innerHTML = d;
    }
    dial('dialVolt', 429, 691, '2В', 'M412 687l5-2.500v5z', [['10В',412,664,-118],['100В',448,660,-62],['200В',465,678,-20],['500В',460,708,38],['1В',400,680,-165],['0,1В',401,708,142]], true);
    dial('dialFreq', 533, 691, '200K', 'M529 679l3-6 3 6z', [['250K',540,658,-88],['100K',505,668,-135],['333K',561,668,-50],['500K',569,680,-18],['1K',507,708,140],['1M',561,707,40]], false);
    </script>
</body>

</html>
